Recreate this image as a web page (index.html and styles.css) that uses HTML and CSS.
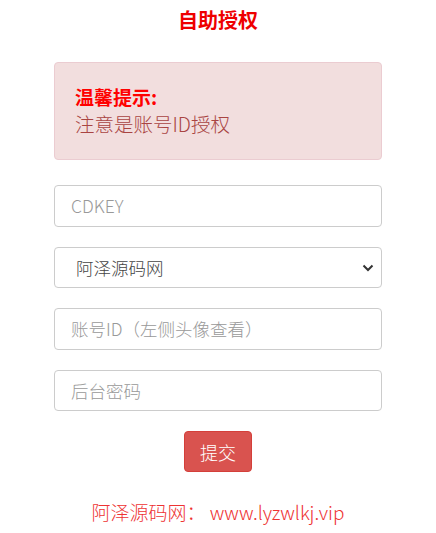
FILE: index.html
```html
<!DOCTYPE html>
<html lang="zh-CN">
<head>
<meta charset="utf-8">
<title>自助授权</title>
<link rel="stylesheet" href="styles.css">
</head>
<body>
<div class="page">
  <h1 class="title">自助授权</h1>
  <div class="alert">
    <div class="alert-head">温馨提示:</div>
    <div class="alert-body">注意是账号ID授权</div>
  </div>
  <form class="form">
    <input class="field" type="text" placeholder="CDKEY">
    <div class="select-wrap">
      <select class="field select">
        <option>阿泽源码网</option>
      </select>
      <svg class="chev" width="12" height="8" viewBox="0 0 12 8"><path d="M1.5 1.5 L6 6 L10.5 1.5" fill="none" stroke="#333" stroke-width="2"/></svg>
    </div>
    <input class="field" type="text" placeholder="账号ID（左侧头像查看）">
    <input class="field" type="password" placeholder="后台密码">
    <div class="actions"><button type="button" class="btn">提交</button></div>
  </form>
  <p class="footer">阿泽源码网： www.lyzwlkj.vip</p>
</div>
</body>
</html>
```
FILE: styles.css
```css
* { box-sizing: border-box; }
html, body { margin: 0; padding: 0; background: #fff; }
body {
  font-family: "Noto Sans CJK SC", "Open Sans", sans-serif;
  color: #555;
}
.page {
  width: 328px;
  margin: 0 auto;
  display: flex;
  flex-direction: column;
}
.title {
  margin: 6px 0 0;
  text-align: center;
  font-size: 20px;
  line-height: 28px;
  font-weight: 700;
  color: #e00;
}
.alert {
  margin-top: 28px;
  background: #f2dede;
  border: 1px solid #ebccd1;
  border-radius: 4px;
  padding: 20px 20px 21px;
}
.alert-head {
  font-size: 19px;
  line-height: 27px;
  font-weight: 700;
  color: #f00;
}
.alert-body {
  font-size: 19.5px;
  line-height: 28px;
  font-weight: 300;
  color: #a94442;
}
.form {
  margin-top: 25px;
  display: flex;
  flex-direction: column;
  gap: 20px;
}
.field {
  display: block;
  width: 100%;
  height: 41.5px;
  border: 1px solid #ccc;
  border-radius: 4px;
  padding: 0 16px;
  font-family: inherit;
  font-size: 17.5px;
  font-weight: 300;
  color: #555;
  background: #fff;
  outline: none;
}
.field::placeholder { color: #999; }
.select-wrap { position: relative; }
.select {
  appearance: none;
  -webkit-appearance: none;
  padding-left: 21px;
  color: #444;
}
.chev {
  position: absolute;
  right: 8px;
  top: 17px;
  pointer-events: none;
}
.actions { display: flex; justify-content: center; }
.btn {
  width: 68px;
  height: 41px;
  border: 1px solid #d43f3a;
  border-radius: 4px;
  background: #d9534f;
  color: #fff;
  font-family: inherit;
  font-size: 18px;
  font-weight: 300;
  padding: 0;
}
.footer {
  margin: 27px 0 0;
  text-align: center;
  font-size: 19px;
  line-height: 26px;
  font-weight: 300;
  color: #e33;
}
```
